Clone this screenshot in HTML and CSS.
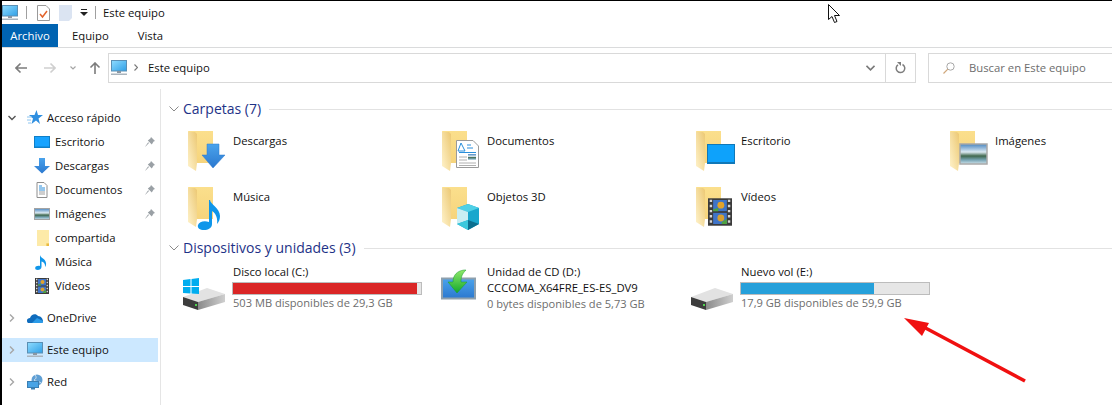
FILE: index.html
```html
<!DOCTYPE html>
<html lang="es">

<head>
    <meta charset="UTF-8">
    <title>Este equipo</title>
    <link rel="stylesheet" href="styles.css">
</head>

<body>
    <svg class="defs">
        <defs>
            <linearGradient id="flap" x1="0" y1="1" x2="1" y2="0">
                <stop offset="0" stop-color="#fff3cc" />
                <stop offset="1" stop-color="#ecc873" />
            </linearGradient>
            <linearGradient id="back" x1="0" y1="0" x2="0" y2="1">
                <stop offset="0" stop-color="#fbdf8c" />
                <stop offset="1" stop-color="#f6d47c" />
            </linearGradient>
            <linearGradient id="screen" x1="0" y1="0" x2="1" y2="1">
                <stop offset="0" stop-color="#8fdcff" />
                <stop offset="1" stop-color="#2f9fe6" />
            </linearGradient>
            <linearGradient id="blue" x1="0" y1="0" x2="0" y2="1">
                <stop offset="0" stop-color="#4aa3ec" />
                <stop offset="1" stop-color="#2b78cf" />
            </linearGradient>
            <linearGradient id="sky" x1="0" y1="0" x2="0" y2="1">
                <stop offset="0" stop-color="#4a86c0" />
                <stop offset="0.4" stop-color="#dbe9f1" />
                <stop offset="0.6" stop-color="#40684e" />
                <stop offset="0.8" stop-color="#78a5b5" />
                <stop offset="1" stop-color="#cfe2ea" />
            </linearGradient>
            <linearGradient id="disk" x1="0" y1="0" x2="1" y2="0">
                <stop offset="0" stop-color="#8a8a8a" />
                <stop offset="1" stop-color="#cfcfcf" />
            </linearGradient>
            <linearGradient id="green" x1="0" y1="0" x2="0" y2="1">
                <stop offset="0" stop-color="#8fe86a" />
                <stop offset="1" stop-color="#12a82c" />
            </linearGradient>

            <symbol id="folder" viewBox="0 0 50 56">
                <path d="M5 4H30V36H13Z" fill="url(#back)" />
                <path d="M5 5H12L14 7V36L13 44L5 39Z" fill="url(#flap)" />
            </symbol>
            <symbol id="pc" viewBox="0 0 16 16">
                <rect x="0.5" y="0.5" width="15" height="10.5" fill="url(#screen)" stroke="#5a8fb4" />
                <rect x="6" y="11" width="4" height="2" fill="#8a97a3" />
                <rect x="0" y="13.5" width="16" height="1.5" fill="#a9b4bd" />
            </symbol>
            <symbol id="pin" viewBox="0 0 10 10">
                <path d="M6 0L10 4L8.6 4.6L6.8 7.4L2.8 3.4L5.4 1.4ZM4 6L0.6 9.6L0.2 9.4L3.2 5.2Z" fill="#9aa0a5" />
            </symbol>
            <symbol id="note" viewBox="0 0 16 16">
                <path d="M6 1C6.5 4 11.5 4.5 12 9C12.3 10.5 11.8 12 11 13C11.4 9.5 9.5 8 7.5 7.5V13C7.5 15 5.5 16 3.8 16C2 16 1 15 1.2 13.7C1.5 12.3 3.5 11.5 6 12Z" fill="#0f96ea" />
            </symbol>
            <symbol id="film" viewBox="0 0 14 16">
                <rect width="14" height="16" fill="#3b3b3b" />
                <path d="M1 1.5h1.4M1 4.5h1.4M1 7.5h1.4M1 10.5h1.4M1 13.5h1.4M11.6 1.5H13M11.6 4.5H13M11.6 7.5H13M11.6 10.5H13M11.6 13.5H13" stroke="#d8d8d8" stroke-width="1.4" />
                <rect x="3" y="1" width="8" height="6.5" fill="#3f74c8" />
                <rect x="3" y="8.5" width="8" height="6.5" fill="#3f74c8" />
                <circle cx="7.5" cy="4" r="2" fill="#e3a32a" />
                <circle cx="7.5" cy="11.5" r="2" fill="#d8a02f" />
                <path d="M3 6.5L6 5.500V7.500H3ZM8 14L11 12V15H8Z" fill="#4ea33f" />
            </symbol>
            <symbol id="drive" viewBox="0 0 44 24">
                <path d="M0 10L24 1L42 7L15 15Z" fill="#e2e2e2" />
                <path d="M15 15L42 7V15L15 23Z" fill="url(#disk)" />
                <path d="M0 10L15 15V23L0 18Z" fill="#3d3d3d" />
                <rect x="12" y="17" width="2" height="2" fill="#4fd14f" />
            </symbol>
        </defs>
    </svg>

    <div class="titlebar">
        <svg class="ico-16 tb-pc"><use href="#pc" /></svg>
        <span class="sep sep-a"></span>
        <svg class="qa-doc" viewBox="0 0 13 16">
            <path d="M.5.5H9L12.5 4V15.5H.5Z" fill="#fff" stroke="#9a9a9a" />
            <path d="M3 9L5.5 12L10 6" fill="none" stroke="#e2622a" stroke-width="1.5" />
        </svg>
        <svg class="qa-blank" viewBox="0 0 13 16">
            <path d="M0 0H13V13L10 16H0Z" fill="#dbe4f2" />
        </svg>
        <svg class="qa-drop" viewBox="0 0 8 7">
            <path d="M1 .5H7" stroke="#222" />
            <path d="M0 3H8L4 7Z" fill="#222" />
        </svg>
        <span class="sep sep-b"></span>
        <span class="title">Este equipo</span>
    </div>

    <div class="tabs">
        <div class="tab tab-file">Archivo</div>
        <div class="tab tab-pc">Equipo</div>
        <div class="tab tab-view">Vista</div>
    </div>

    <div class="navbar">
        <svg class="nav-btn nav-back" viewBox="0 0 12 12">
            <path d="M12 6H1M5.5 1.5L1 6L5.5 10.5" fill="none" stroke="#7c7c7c" stroke-width="1.6" />
        </svg>
        <svg class="nav-btn nav-fwd" viewBox="0 0 12 12">
            <path d="M0 6H11M6.5 1.5L11 6L6.5 10.5" fill="none" stroke="#cfcfcf" stroke-width="1.6" />
        </svg>
        <svg class="nav-recent" viewBox="0 0 6 4">
            <path d="M.5 .5L3 3L5.5 .5" fill="none" stroke="#a5a5a5" stroke-width="1.2" />
        </svg>
        <svg class="nav-btn nav-up" viewBox="0 0 12 12">
            <path d="M6 12V1M1.5 5.5L6 1L10.5 5.5" fill="none" stroke="#7c7c7c" stroke-width="1.6" />
        </svg>
        <div class="address">
            <svg class="ico-16 addr-pc"><use href="#pc" /></svg>
            <svg class="addr-sep" viewBox="0 0 4 7">
                <path d="M.5 .5L3.5 3.5L.5 6.5" fill="none" stroke="#7a7a7a" stroke-width="1.2" />
            </svg>
            <span class="addr-text">Este equipo</span>
            <svg class="addr-chev" viewBox="0 0 9 6">
                <path d="M.5 .8L4.5 4.8L8.5 .8" fill="none" stroke="#7a7a7a" stroke-width="1.6" />
            </svg>
            <div class="addr-refresh">
                <svg viewBox="0 0 11 12">
                    <path d="M7.5 2.5A4.3 4.3 0 1 1 3 2.8" fill="none" stroke="#7d7d7d" stroke-width="1.5" />
                    <path d="M2 0L6 0V4Z" fill="#7d7d7d" />
                </svg>
            </div>
        </div>
        <div class="search">
            <svg viewBox="0 0 12 12">
                <circle cx="7.5" cy="4.5" r="3.7" fill="none" stroke="#a8a8a8" />
                <path d="M4.8 7.2L.5 11.5" stroke="#d0a87c" stroke-width="1.2" />
            </svg>
            <span>Buscar en Este equipo</span>
        </div>
    </div>

    <div class="main">
        <nav class="sidebar">
            <div class="nav-group">
                <div class="row">
                    <svg class="chev" viewBox="0 0 8 8"><path d="M.5 2L4 5.5L7.5 2" fill="none" stroke="#555" stroke-width="1.4" /></svg>
                    <svg class="ico-16" viewBox="0 0 16 16">
                        <path d="M9.5 0L11 5H16L11.5 8.5L13 14L9 10.5L4.5 14L6 8.5L2 5H7.5Z" fill="#2f8fe0" />
                        <path d="M0 7H5M0 10H4M1 13H4" stroke="#8cc4ef" />
                    </svg>
                    <span>Acceso rápido</span>
                </div>
                <div class="row sub">
                    <svg class="ico-16" viewBox="0 0 16 16">
                        <rect x="0" y="2" width="16" height="12" fill="#0f7fc8" />
                        <rect x="1" y="3" width="14" height="9.5" fill="#17a3ff" />
                    </svg>
                    <span>Escritorio</span>
                    <svg class="pin"><use href="#pin" /></svg>
                </div>
                <div class="row sub">
                    <svg class="ico-16" viewBox="0 0 16 16">
                        <path d="M5 0H11V8H16L8 15.500L0 8H5Z" fill="url(#blue)" />
                    </svg>
                    <span>Descargas</span>
                    <svg class="pin"><use href="#pin" /></svg>
                </div>
                <div class="row sub">
                    <svg class="ico-16" viewBox="0 0 16 16">
                        <path d="M3 .5H10L13 3.500V15.500H3Z" fill="#fff" stroke="#8e8e8e" />
                        <path d="M5 4H8M5 6H11M5 8H11" stroke="#2a8fdc" />
                        <path d="M5 10H11M5 12H11" stroke="#9d9d9d" />
                    </svg>
                    <span>Documentos</span>
                    <svg class="pin"><use href="#pin" /></svg>
                </div>
                <div class="row sub">
                    <svg class="ico-16" viewBox="0 0 16 16">
                        <rect x=".5" y="2.500" width="15" height="11" fill="url(#sky)" stroke="#a3a3a3" />
                    </svg>
                    <span>Imágenes</span>
                    <svg class="pin"><use href="#pin" /></svg>
                </div>
                <div class="row sub">
                    <svg class="ico-16" viewBox="0 0 16 16">
                        <path d="M3 0H15V16H3Z" fill="#fde48f" />
                        <path d="M3 0H15V13H12V16H3Z" fill="#fdeaa8" />
                        <path d="M12.500 13.500H15V16H12.500Z" fill="#e9b93f" />
                    </svg>
                    <span>compartida</span>
                </div>
                <div class="row sub">
                    <svg class="ico-16"><use href="#note" /></svg>
                    <span>Música</span>
                </div>
                <div class="row sub">
                    <svg class="ico-16"><use href="#film" /></svg>
                    <span>Vídeos</span>
                </div>
            </div>
            <div class="nav-group">
                <div class="row">
                    <svg class="chev" viewBox="0 0 8 8"><path d="M2 .5L5.500 4L2 7.500" fill="none" stroke="#a6a6a6" stroke-width="1.4" /></svg>
                    <svg class="ico-16" viewBox="0 0 16 16">
                        <path d="M1 13C-1 11 0 8 3 8C4 4 9 3 11 6C14 6 16 9 16 11C16 12 15.500 13 15 13Z" fill="#0f6cbd" />
                        <path d="M5 13L10 8L16 11C16 12 15.500 13 15 13Z" fill="#2b9be8" />
                    </svg>
                    <span>OneDrive</span>
                </div>
            </div>
            <div class="nav-group">
                <div class="row selected">
                    <svg class="chev" viewBox="0 0 8 8"><path d="M2 .5L5.500 4L2 7.500" fill="none" stroke="#a6a6a6" stroke-width="1.4" /></svg>
                    <svg class="ico-16"><use href="#pc" /></svg>
                    <span>Este equipo</span>
                </div>
            </div>
            <div class="nav-group">
                <div class="row">
                    <svg class="chev" viewBox="0 0 8 8"><path d="M2 .5L5.500 4L2 7.500" fill="none" stroke="#a6a6a6" stroke-width="1.4" /></svg>
                    <svg class="ico-16" viewBox="0 0 16 16">
                        <circle cx="10" cy="6" r="5.500" fill="#5f9fd4" />
                        <path d="M8 1C10 3 9 5 7 6C9 8 12 7 14 9" fill="none" stroke="#d6e6f2" />
                        <rect x=".5" y="7.500" width="11" height="6" fill="#49a4e6" stroke="#3a7fb3" />
                        <rect x="4" y="14" width="4" height="1.500" fill="#3a7fb3" />
                    </svg>
                    <span>Red</span>
                </div>
            </div>
        </nav>

        <section class="content">
            <div class="group-head">
                <svg viewBox="0 0 10 6"><path d="M.5 .5L5 5L9.500 .5" fill="none" stroke="#8a8a8a" /></svg>
                <h2>Carpetas (7)</h2>
                <span class="rule"></span>
            </div>
            <div class="folders">
                <div class="item">
                    <svg class="big" viewBox="0 0 50 56">
                        <use href="#folder" width="50" height="56" />
                        <path d="M24 17H36V28H42L30 41L19 28H24Z" fill="url(#blue)" stroke="#2b78cf" stroke-width=".5" />
                    </svg>
                    <span>Descargas</span>
                </div>
                <div class="item">
                    <svg class="big" viewBox="0 0 50 56">
                        <use href="#folder" width="50" height="56" />
                        <path d="M19.500 13.500H36L41.500 19V40.500H19.500Z" fill="#fff" stroke="#9a9a9a" />
                        <path d="M24 16L21 24H28ZM30 18H34M30 21H36" stroke="#2a8fdc" fill="none" />
                        <path d="M22 25.500H39" stroke="#2a8fdc" />
                        <rect x="31" y="27" width="8" height="6" fill="url(#sky)" />
                        <path d="M22 30H30M22 33H30M22 36H39M22 38.500H39" stroke="#b0b0b0" />
                    </svg>
                    <span>Documentos</span>
                </div>
                <div class="item">
                    <svg class="big" viewBox="0 0 50 56">
                        <use href="#folder" width="50" height="56" />
                        <rect x="16.500" y="17.500" width="27" height="19" fill="#0ea2fb" stroke="#1078b8" />
                        <path d="M17 36H43" stroke="#1078b8" stroke-width="2" />
                    </svg>
                    <span>Escritorio</span>
                </div>
                <div class="item">
                    <svg class="big" viewBox="0 0 50 56">
                        <use href="#folder" width="50" height="56" />
                        <rect x="15" y="17" width="27" height="20" fill="url(#sky)" stroke="#a8a8a8" stroke-width="1.500" />
                    </svg>
                    <span>Imágenes</span>
                </div>
                <div class="item">
                    <svg class="big" viewBox="0 0 50 56">
                        <use href="#folder" width="50" height="56" />
                        <path d="M27 17C27 21 37 25 37 33C37 36 36 39 34 41C35 36 33 30 29 28V41C29 45 25 47 21 47C17 47 14 45 15 42C16 39 21 37 26 39V17Z" fill="#0f96ea" />
                    </svg>
                    <span>Música</span>
                </div>
                <div class="item">
                    <svg class="big" viewBox="0 0 50 56">
                        <use href="#folder" width="50" height="56" />
                        <path d="M20 25L31 21L42 25V41L31 47L20 41Z" fill="#19a7cd" />
                        <path d="M20 25L31 21L42 25L31 29Z" fill="#4fd0e6" />
                        <path d="M20 25L31 29V37L20 41Z" fill="#c9eef3" />
                        <path d="M20 41L31 37L31 47Z" fill="#3cc8dc" />
                        <path d="M31 37L42 41L31 47Z" fill="#0b6f8f" />
                    </svg>
                    <span>Objetos 3D</span>
                </div>
                <div class="item">
                    <svg class="big" viewBox="0 0 50 56">
                        <use href="#folder" width="50" height="56" />
                        <use href="#film" x="17" y="14" width="24" height="30" preserveAspectRatio="none" />
                    </svg>
                    <span>Vídeos</span>
                </div>
            </div>

            <div class="group-head">
                <svg viewBox="0 0 10 6"><path d="M.5 .5L5 5L9.500 .5" fill="none" stroke="#8a8a8a" /></svg>
                <h2>Dispositivos y unidades (3)</h2>
                <span class="rule"></span>
            </div>
            <div class="drives">
                <div class="drive">
                    <svg class="big-drive" viewBox="0 0 50 48">
                        <use href="#drive" x="0" y="23" width="44" height="24" />
                        <path d="M0 16L7.500 15V22H0ZM8.500 15L16 14V22H8.500ZM0 23H7.500V29.500L0 29ZM8.500 23H16V30L8.500 29.500Z" fill="#00adef" />
                    </svg>
                    <div class="drive-info">
                        <div>Disco local (C:)</div>
                        <div class="bar"><div class="fill fill-full" style="width: 98%"></div></div>
                        <div class="muted">503 MB disponibles de 29,3 GB</div>
                    </div>
                </div>
                <div class="drive">
                    <svg class="big-drive" viewBox="0 0 50 48">
                        <rect x="5" y="14.500" width="33" height="20" fill="url(#blue)" stroke="#8ea0ad" stroke-width="2" />
                        <path d="M27 6C20 7 16 11 16 18H11L20 29L30 18H24C24 13 25 10 29 6Z" fill="url(#green)" stroke="#169a2e" stroke-width=".5" />
                    </svg>
                    <div class="drive-info">
                        <div>Unidad de CD (D:)</div>
                        <div class="nowrap">CCCOMA_X64FRE_ES-ES_DV9</div>
                        <div class="muted">0 bytes disponibles de 5,73 GB</div>
                    </div>
                </div>
                <div class="drive">
                    <svg class="big-drive" viewBox="0 0 50 48">
                        <use href="#drive" x="0" y="23" width="44" height="24" />
                    </svg>
                    <div class="drive-info">
                        <div>Nuevo vol (E:)</div>
                        <div class="bar"><div class="fill" style="width: 70.5%"></div></div>
                        <div class="muted">17,9 GB disponibles de 59,9 GB</div>
                    </div>
                </div>
            </div>
        </section>
    </div>

    <!-- cursor and annotation drawn over the window -->
    <svg class="cursor" viewBox="0 0 13 20">
        <path d="M.5 .5V15.500L4 12.500L6.500 18.500L9 17.500L6.500 11.500H11.500Z" fill="#fff" stroke="#111" />
    </svg>
    <svg class="annotation" viewBox="0 0 130 70">
        <path d="M125 67L18 10" stroke="#f01010" stroke-width="3.500" />
        <path d="M4 4L29 9L22 22Z" fill="#f01010" />
    </svg>
</body>

</html>
```

FILE: styles.css
```css
* {
    margin: 0;
    padding: 0;
    box-sizing: border-box;
}

body {
    position: relative;
    height: 405px;
    overflow: hidden;
    background-color: white;
    border-top: 1px solid black;
    border-left: 2px solid black;
    font-family: "Open Sans", sans-serif;
    font-size: 11.3px;
    color: #111;
}

svg {
    display: block;
    flex-shrink: 0;
}

.defs {
    width: 0;
    height: 0;
}

.ico-16 {
    width: 16px;
    height: 16px;
}

.titlebar {
    display: flex;
    align-items: center;
    height: 23px;
}

.sep {
    width: 1px;
    height: 13px;
    background-color: #a0a0a0;
}

.sep-a {
    margin-left: 8px;
}

.qa-doc {
    width: 13px;
    height: 16px;
    margin-left: 10px;
}

.qa-blank {
    width: 13px;
    height: 16px;
    margin-left: 9px;
}

.qa-drop {
    width: 8px;
    height: 7px;
    margin-left: 8px;
}

.sep-b {
    margin-left: 7px;
}

.title {
    margin-left: 7px;
}

.tabs {
    display: flex;
    height: 24px;
    border-bottom: 1px solid #dadbdc;
}

.tab {
    display: flex;
    align-items: center;
    height: 23px;
}

.tab-file {
    width: 56px;
    justify-content: center;
    background-color: #0063b1;
    color: white;
}

.tab-pc {
    margin-left: 14px;
}

.tab-view {
    margin-left: 29px;
}

.navbar {
    display: flex;
    align-items: center;
    height: 41px;
    padding-bottom: 6px;
    padding-top: 4px;
}

.nav-btn {
    width: 12px;
    height: 12px;
}

.nav-back {
    margin-left: 13px;
}

.nav-fwd {
    margin-left: 17px;
}

.nav-recent {
    width: 6px;
    height: 4px;
    margin-left: 14px;
}

.nav-up {
    margin-left: 13px;
}

.address {
    display: flex;
    align-items: center;
    width: 808px;
    height: 30px;
    margin-left: 7px;
    border: 1px solid #d9d9d9;
}

.addr-pc {
    margin-left: 2px;
}

.addr-sep {
    width: 4px;
    height: 7px;
    margin-left: 7px;
}

.addr-text {
    margin-left: 10px;
}

.addr-chev {
    width: 9px;
    height: 6px;
    margin-left: auto;
}

.addr-refresh {
    display: flex;
    align-items: center;
    justify-content: center;
    width: 30px;
    height: 100%;
    margin-left: 10px;
    border-left: 1px solid #d9d9d9;
}

.addr-refresh svg {
    width: 11px;
    height: 12px;
}

.search {
    display: flex;
    align-items: center;
    flex: 1;
    height: 30px;
    margin-left: 12px;
    padding-left: 14px;
    border: 1px solid #d9d9d9;
    border-right: none;
    color: #6d6d6d;
}

.search svg {
    width: 12px;
    height: 12px;
    margin-right: 14px;
}

.main {
    display: flex;
    height: 316px;
}

.sidebar {
    flex-shrink: 0;
    width: 159px;
    padding-top: 17px;
    border-right: 1px solid #e5e5e5;
}

.nav-group {
    margin-bottom: 8px;
}

.row {
    display: flex;
    align-items: center;
    width: 156px;
    height: 24px;
    padding-left: 6px;
}

.row span {
    padding-bottom: 1px;
}

.chev {
    width: 8px;
    height: 8px;
    margin-right: 11px;
}

.row .ico-16 {
    margin-right: 4px;
}

.sub {
    padding-left: 32px;
}

.sub .ico-16 {
    margin-right: 5px;
}

.pin {
    width: 10px;
    height: 10px;
    margin-left: auto;
    margin-right: 3px;
}

.selected {
    background-color: #cce8ff;
}

.content {
    flex: 1;
    min-width: 0;
    padding: 11px 0 0 22px;
}

.group-head {
    display: flex;
    align-items: center;
    height: 18px;
}

.group-head svg {
    width: 10px;
    height: 6px;
    margin-right: 4px;
    margin-left: -14px;
}

.group-head h2 {
    padding-bottom: 2px;
    font-size: 14px;
    font-weight: normal;
    color: #1e3287;
    white-space: nowrap;
}

.rule {
    flex: 1;
    height: 1px;
    margin-left: 8px;
    background-color: #e2e2e2;
}

.folders {
    display: grid;
    grid-template-columns: repeat(3, 254px) 1fr;
    grid-template-rows: repeat(2, 56px);
    margin-top: 9px;
}

.item {
    display: flex;
    align-items: flex-start;
}

.item span {
    padding-top: 6px;
}

.big {
    width: 50px;
    height: 56px;
}

.drives {
    display: grid;
    grid-template-columns: repeat(3, 254px);
    margin-top: 7px;
}

.drive {
    display: flex;
}

.big-drive {
    width: 50px;
    height: 48px;
}

.drive-info {
    width: 189px;
    line-height: 16px;
}

.muted {
    font-size: 11.1px;
    color: #6d6d6d;
    white-space: nowrap;
}

.nowrap {
    white-space: nowrap;
}

.bar {
    height: 13px;
    margin: 2px 0 0 -1px;
    background-color: #e6e6e6;
    border: 1px solid #bcbcbc;
}

.fill {
    height: 100%;
    background-color: #26a0da;
}

.fill-full {
    background-color: #da2626;
}

.cursor {
    position: absolute;
    left: 826px;
    top: 3px;
    width: 13px;
    height: 20px;
}

.annotation {
    position: absolute;
    left: 898px;
    top: 313px;
    width: 130px;
    height: 70px;
}
```
